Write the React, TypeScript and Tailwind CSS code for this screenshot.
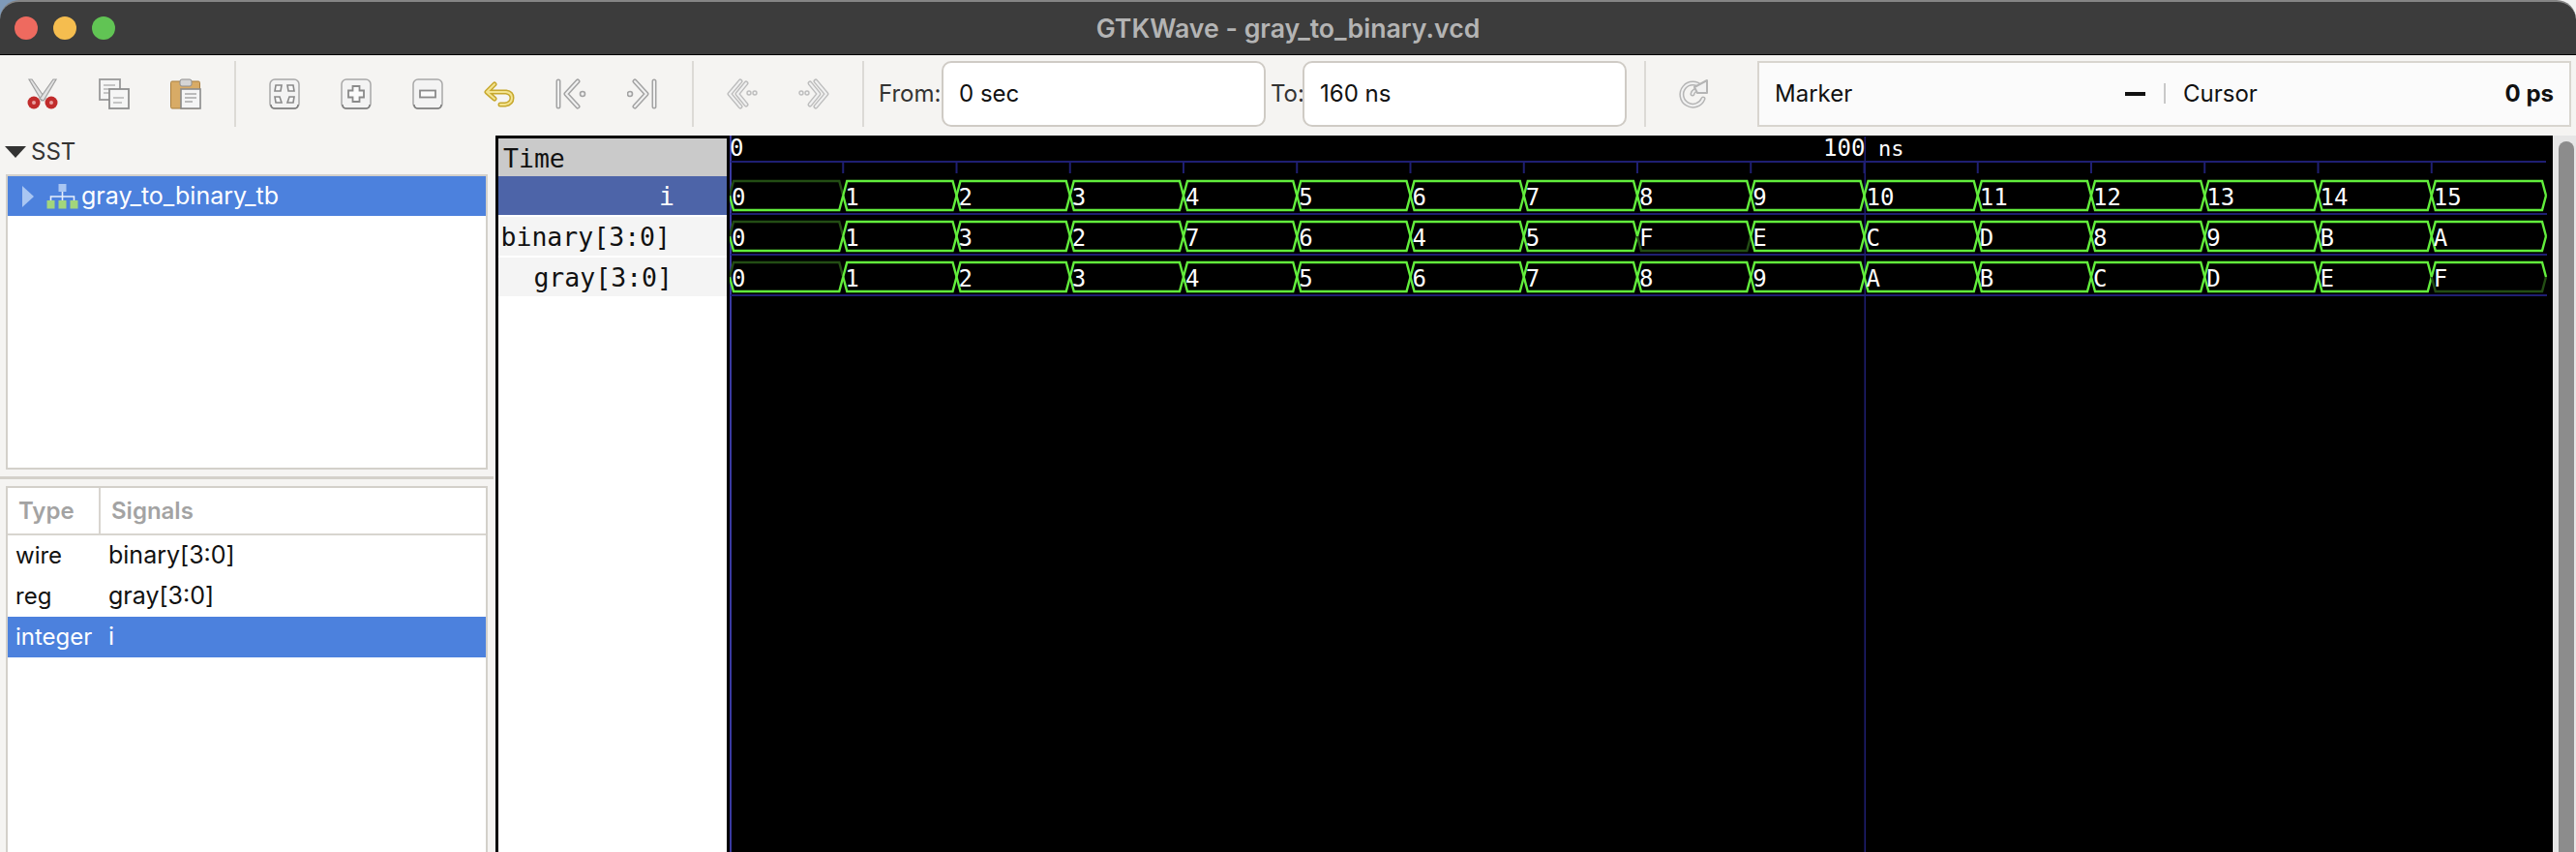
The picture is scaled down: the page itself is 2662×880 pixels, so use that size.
import React from 'react'

const ROW1 = ['0', '1', '2', '3', '4', '5', '6', '7', '8', '9', '10', '11', '12', '13', '14', '15']
const ROW2 = ['0', '1', '3', '2', '7', '6', '4', '5', 'F', 'E', 'C', 'D', '8', '9', 'B', 'A']
const ROW3 = ['0', '1', '2', '3', '4', '5', '6', '7', '8', '9', 'A', 'B', 'C', 'D', 'E', 'F']

const tick = (k: number) => 753.5 + 117.25 * k

// top y of every trace, and which segment has a dim edge
const TRACES = [
  { top: 187, values: ROW1, dimBottom: [] as number[] },
  { top: 229, values: ROW2, dimBottom: [8] },
  { top: 271, values: ROW3, dimBottom: [15] },
]

const GREEN = '#62ee3c'
const DIM = '#234d14'
const BLUE = '#1f1f72'

function Trace({ top, values, dimBottom }: { top: number; values: string[]; dimBottom: number[] }) {
  const bottom = top + 30
  const mid = top + 15
  return (
    <g fill="none" strokeWidth={2.4}>
      {values.map((v, k) => {
        const a = tick(k) + 0.5
        const b = k === 15 ? 2631 : tick(k + 1) + 0.5
        const upper = `M${a} ${mid} L${a + 4} ${top} L${b - 4} ${top} L${b} ${mid}`
        const lower = `M${a} ${mid} L${a + 4} ${bottom} L${b - 4} ${bottom} L${b} ${mid}`
        const isDimBottom = dimBottom.includes(k)
        return (
          <g key={k}>
            <path d={lower} stroke={isDimBottom ? DIM : GREEN} />
            <path d={upper} stroke={k === 0 ? DIM : GREEN} />
            <text
              x={a + 2}
              y={top + 25}
              stroke="none"
              className="fill-white font-['DejaVu_Sans_Mono',monospace] text-[24px]"
            >
              {v}
            </text>
          </g>
        )
      })}
      <rect x={755} y={bottom + 3} width={1877} height={2} fill={BLUE} stroke="none" />
    </g>
  )
}

function WaveCanvas() {
  return (
    <svg viewBox="754 140 1884 740" className="block h-full w-full bg-black">
      <rect x={754} y={140} width={2} height={740} fill="#3a3aa0" />
      <rect x={1926.5} y={141} width={1.5} height={739} fill={BLUE} />
      <rect x={755} y={166} width={1876} height={2} fill={BLUE} />
      {Array.from({ length: 15 }, (_, i) => (
        <rect key={i} x={tick(i + 1) - 0.5} y={167} width={2} height={12} fill={BLUE} />
      ))}
      <text x={754} y={161} className="fill-white font-['DejaVu_Sans_Mono',monospace] text-[24px]">
        0
      </text>
      <text x={1884} y={161} className="fill-white font-['DejaVu_Sans_Mono',monospace] text-[24px]">
        100
      </text>
      <text x={1941} y={161} className="fill-white font-['DejaVu_Sans_Mono',monospace] text-[22px]">
        ns
      </text>
      {TRACES.map((t) => (
        <Trace key={t.top} {...t} />
      ))}
    </svg>
  )
}

// gtk stock icons: a thick dark stroke with a thin light one on top
function Hollow({ d, outer = '#a3a3a3', inner = '#f1f1f1' }: { d: string; outer?: string; inner?: string }) {
  return (
    <>
      <path d={d} fill="none" stroke={outer} strokeWidth={5} strokeLinecap="round" strokeLinejoin="round" />
      <path d={d} fill="none" stroke={inner} strokeWidth={2} strokeLinecap="round" strokeLinejoin="round" />
    </>
  )
}

function Icon({ children }: { children: React.ReactNode }) {
  return (
    <svg viewBox="0 0 32 32" className="h-8 w-8 shrink-0">
      {children}
    </svg>
  )
}

function RoundButton({ children }: { children: React.ReactNode }) {
  return (
    <Icon>
      <rect x={1} y={1} width={30} height={30} rx={5} fill="#f3f3f3" stroke="#a8a8a8" strokeWidth={1.5} />
      <path d="M2 27 Q2 31 6 31 H26 Q30 31 30 27" fill="none" stroke="#7d7d7d" strokeWidth={1.5} />
      {children}
    </Icon>
  )
}

const Scissors = () => (
  <Icon>
    <path d="M2 1 L5 1 L19 21 L15 23 Z" fill="#e2e2e2" stroke="#a0a0a0" strokeWidth={1.2} />
    <path d="M30 1 L27 1 L13 21 L17 23 Z" fill="#e2e2e2" stroke="#a0a0a0" strokeWidth={1.2} />
    <circle cx={7} cy={25} r={6.5} fill="#c12c2c" />
    <circle cx={7} cy={25} r={2} fill="#e8a0a0" />
    <circle cx={25} cy={25} r={6.5} fill="#c12c2c" />
    <circle cx={25} cy={25} r={2} fill="#e8a0a0" />
  </Icon>
)

const Copy = () => (
  <Icon>
    <rect x={1} y={1} width={21} height={21} fill="#f5f5f5" stroke="#9a9a9a" strokeWidth={1.8} />
    <path d="M5 7 H17 M5 11 H17 M5 15 H12" stroke="#b5b5b5" strokeWidth={1.4} />
    <rect x={11} y={11} width={20} height={20} fill="#f5f5f5" stroke="#8f8f8f" strokeWidth={1.8} />
    <path d="M15 20 H26 M15 25 H24" stroke="#b5b5b5" strokeWidth={1.4} />
  </Icon>
)

const Paste = () => (
  <Icon>
    <rect x={0.5} y={3} width={30} height={28} rx={1.5} fill="#d8ab66" stroke="#a87f3f" />
    <rect x={10} y={1} width={12} height={7} rx={2} fill="#d5d5d5" stroke="#8f8f8f" />
    <rect x={11} y={11} width={20} height={20} fill="#f5f5f5" stroke="#8a8a8a" strokeWidth={1.6} />
    <path d="M15 16 H27 M15 20 H27 M15 24 H23" stroke="#a8a8a8" strokeWidth={1.4} />
  </Icon>
)

const ZoomFit = () => (
  <RoundButton>
    <g fill="#f8f8f8" stroke="#8a8a8a" strokeWidth={1.6}>
      <path d="M7 7 H13 L12 13 H6 Z" />
      <path d="M19 7 H25 L26 13 H20 Z" />
      <path d="M6 19 H11 L13 25 H7 Z" />
      <path d="M21 19 H26 L25 25 H19 Z" />
    </g>
  </RoundButton>
)

const ZoomIn = () => (
  <RoundButton>
    <path
      d="M12.5 8 H19.5 V12.5 H24 V19.5 H19.5 V24 H12.5 V19.5 H8 V12.5 H12.5 Z"
      fill="#fbfbfb"
      stroke="#8a8a8a"
      strokeWidth={1.8}
    />
  </RoundButton>
)

const ZoomOut = () => (
  <RoundButton>
    <rect x={8} y={12.5} width={16} height={7} fill="#fbfbfb" stroke="#8a8a8a" strokeWidth={1.8} />
  </RoundButton>
)

const Undo = () => (
  <Icon>
    <Hollow d="M11 6 L3 14 L11 21 M4 14 H23 Q29 15 29 20 Q29 26 22 27 H17" outer="#c7a82e" inner="#f3e38f" />
  </Icon>
)

const First = () => (
  <Icon>
    <Hollow d="M3 3 V29" />
    <Hollow d="M23 3 L11 16 L23 29" />
    <circle cx={28} cy={16} r={2.5} fill="#f1f1f1" stroke="#a3a3a3" strokeWidth={1.6} />
  </Icon>
)

const Last = () => (
  <Icon>
    <Hollow d="M28 3 V29" />
    <Hollow d="M8 3 L20 16 L8 29" />
    <circle cx={3} cy={16} r={2.5} fill="#f1f1f1" stroke="#a3a3a3" strokeWidth={1.6} />
  </Icon>
)

const Prev = () => (
  <Icon>
    <Hollow d="M14 3 L3 16 L14 29" outer="#bdbdbd" />
    <Hollow d="M20 5 L11 16 L20 27" outer="#bdbdbd" />
    <circle cx={23} cy={15} r={2} fill="#f1f1f1" stroke="#bdbdbd" strokeWidth={1.4} />
    <circle cx={29} cy={15} r={2} fill="#f1f1f1" stroke="#bdbdbd" strokeWidth={1.4} />
  </Icon>
)

const Next = () => (
  <Icon>
    <Hollow d="M18 3 L29 16 L18 29" outer="#bdbdbd" />
    <Hollow d="M12 5 L21 16 L12 27" outer="#bdbdbd" />
    <circle cx={3} cy={15} r={2} fill="#f1f1f1" stroke="#bdbdbd" strokeWidth={1.4} />
    <circle cx={9} cy={15} r={2} fill="#f1f1f1" stroke="#bdbdbd" strokeWidth={1.4} />
  </Icon>
)

const Reload = () => (
  <Icon>
    <Hollow d="M24 9 A11.5 11.5 0 1 0 26 21" outer="#b5b5b5" />
    <Hollow d="M15 16 A5 5 0 0 1 21 12" outer="#b5b5b5" />
    <path d="M17 9 L30 2 V15 H20 Z" fill="#f1f1f1" stroke="#b5b5b5" strokeWidth={2} strokeLinejoin="round" />
  </Icon>
)

const ToolSep = ({ className }: { className: string }) => (
  <div className={`h-[68px] w-[2px] shrink-0 bg-[#dcdad6] ${className}`} />
)

function Toolbar() {
  return (
    <div className="flex h-[83px] shrink-0 items-center bg-[#f5f4f2] pb-[4px] pl-[28px] text-[24px] text-[#333]">
      <div className="flex gap-[42px]">
        <Scissors />
        <Copy />
        <Paste />
      </div>
      <ToolSep className="ml-[34px]" />
      <div className="ml-[34px] flex gap-[42px]">
        <ZoomFit />
        <ZoomIn />
        <ZoomOut />
        <Undo />
        <First />
        <Last />
      </div>
      <ToolSep className="ml-[35px]" />
      <div className="ml-[34px] flex gap-[42px]">
        <Prev />
        <Next />
      </div>
      <ToolSep className="ml-[34px]" />
      <span className="ml-[15px] w-[65px] shrink-0">From:</span>
      <div className="flex h-[68px] w-[335px] shrink-0 items-center rounded-[10px] border-2 border-[#cfcbc5] bg-white pl-[16px] text-[#111]">
        0 sec
      </div>
      <span className="ml-[5px] w-[33px] shrink-0">To:</span>
      <div className="flex h-[68px] w-[335px] shrink-0 items-center rounded-[10px] border-2 border-[#cfcbc5] bg-white pl-[16px] text-[#111]">
        160 ns
      </div>
      <ToolSep className="ml-[18px]" />
      <div className="ml-[33px] flex w-[32px] justify-center">
        <Reload />
      </div>
      <div className="ml-[50px] flex h-[68px] w-[841px] shrink-0 items-center border-2 border-[#d8d5cf] bg-[#fbfbfb] pl-[16px] pr-[16px] text-[#111]">
        <span className="w-[362px] shrink-0">Marker</span>
        <span className="h-[4px] w-[21px] bg-[#111]" />
        <span className="ml-[19px] h-[21px] w-[2px] bg-[#c9c9c9]" />
        <span className="ml-[18px]">Cursor</span>
        <span className="ml-auto font-bold">0 ps</span>
      </div>
    </div>
  )
}

function TreeIcon() {
  return (
    <svg viewBox="0 0 33 26" className="h-[26px] w-[33px] shrink-0">
      <rect x={12.5} y={0} width={8} height={8} fill="#a9c6f2" />
      <path d="M16.5 8 V13 M4.5 17 V13 H28.5 V17 M16.5 13 V17" fill="none" stroke="#e6eefb" strokeWidth={1.6} />
      <rect x={0.5} y={17} width={8} height={8.5} fill="#a3d67c" />
      <rect x={12.5} y={17} width={8} height={8.5} fill="#a3d67c" />
      <rect x={24.5} y={17} width={8} height={8.5} fill="#a3d67c" />
    </svg>
  )
}

function LeftPane() {
  return (
    <div className="flex w-[512px] shrink-0 flex-col bg-[#f5f4f2] text-[24px]">
      <div className="flex h-[40px] shrink-0 items-center pb-[6px] pl-[5px] text-[#333]">
        <span className="h-0 w-0 border-x-[11px] border-t-[12px] border-x-transparent border-t-[#333]" />
        <span className="ml-[5px]">SST</span>
      </div>
      <div className="ml-[6px] mr-[8px] h-[305px] shrink-0 border-2 border-[#d3d0ca] bg-white">
        <div className="flex h-[41px] items-center bg-[#4c81dd] pl-[15px] text-white">
          <span className="h-0 w-0 border-y-[11px] border-l-[12px] border-y-transparent border-l-[#a9c6f2]" />
          <span className="ml-[13px]">
            <TreeIcon />
          </span>
          <span className="ml-[3px] text-[25px]">gray_to_binary_tb</span>
        </div>
      </div>
      <div className="mt-[7px] h-[3px] w-[510px] shrink-0 bg-[#d3d0ca]" />
      <div className="ml-[6px] mr-[8px] mt-[7px] flex-1 border-2 border-b-0 border-[#d3d0ca] bg-white">
        <div className="flex h-[49px] border-b-2 border-[#d8d5cf] font-semibold text-[#a3a3a3]">
          <div className="flex w-[96px] items-center border-r-2 border-[#d8d5cf] pl-[11px]">Type</div>
          <div className="flex items-center pl-[11px]">Signals</div>
        </div>
        {[
          ['wire', 'binary[3:0]'],
          ['reg', 'gray[3:0]'],
          ['integer', 'i'],
        ].map(([type, name]) => (
          <div
            key={name}
            className={`flex h-[42px] items-center pl-[8px] ${name === 'i' ? 'bg-[#4c81dd] text-white' : 'text-[#111]'}`}
          >
            <span className="w-[96px]">{type}</span>
            <span className="text-[25px]">{name}</span>
          </div>
        ))}
      </div>
    </div>
  )
}

function SignalPane() {
  return (
    <div className="flex w-[242px] shrink-0 flex-col border-x-[3px] border-t-[3px] border-black bg-white font-['DejaVu_Sans_Mono',monospace] text-[26.5px] text-[#111]">
      <div className="flex h-[39px] items-center bg-[#cacaca] pl-[5px] pt-[2px]">Time</div>
      <div className="flex h-[40px] items-center justify-end bg-[#4d64a8] pr-[54px] pt-[2px] text-white">i</div>
      <div className="mt-[2px] flex h-[40px] items-center justify-end bg-[#f4f4f4] pr-[58px] pt-[2px]">binary[3:0]</div>
      <div className="mt-[2px] flex h-[40px] items-center justify-end bg-[#f4f4f4] pr-[56px] pt-[2px]">gray[3:0]</div>
    </div>
  )
}

export default function App() {
  return (
    <div className="flex h-[880px] w-[2662px] flex-col overflow-hidden bg-[linear-gradient(90deg,#7f9ab8_50%,#f2f2f2_50%)] font-['Inter',sans-serif]">
      <div className="grid h-[57px] shrink-0 grid-cols-[1fr_auto_1fr] items-center rounded-t-[20px] border-t-2 border-b border-t-[#858585] border-b-black bg-[#3c3c3c]">
        <div className="flex gap-[16px] pl-[15px]">
          <span className="h-[24px] w-[24px] rounded-full bg-[#ee6a5f]" />
          <span className="h-[24px] w-[24px] rounded-full bg-[#f5bd4f]" />
          <span className="h-[24px] w-[24px] rounded-full bg-[#61c454]" />
        </div>
        <div className="text-[26.7px] font-semibold text-[#b4b4b4]">GTKWave - gray_to_binary.vcd</div>
        <div />
      </div>
      <Toolbar />
      <div className="flex min-h-0 flex-1">
        <LeftPane />
        <SignalPane />
        <div className="min-w-0 flex-1">
          <WaveCanvas />
        </div>
        <div className="w-[24px] shrink-0 bg-[#e6e6e6] pl-[6px] pt-[6px]">
          <div className="h-full w-[16px] rounded-t-full bg-[#8c8c8c]" />
        </div>
      </div>
    </div>
  )
}
